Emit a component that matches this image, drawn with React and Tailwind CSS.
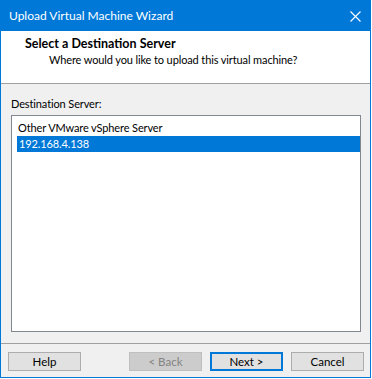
export default function App() {
  const font = { fontFamily: 'Lato, "Noto Sans", "Liberation Sans", sans-serif' };
  const t = "text-[11px] tracking-[-0.12px]";
  return (
    <div className="w-[372px] h-[379px] bg-white" style={font}>
      <div className="w-[371px] h-[378px] border border-[#0078d7] flex flex-col bg-[#f0f0f0]">
        <div className="h-[30px] shrink-0 bg-[#0078d7] flex items-center justify-between pl-[8px] pr-[9px]">
          <span className="text-white text-[12px] leading-none">Upload Virtual Machine Wizard</span>
          <svg width="11" height="11" viewBox="0 0 11 11" className="text-white">
            <path d="M0.5 0.5 L10.5 10.5 M10.5 0.5 L0.5 10.5" stroke="currentColor" strokeWidth="1.1" />
          </svg>
        </div>
        <div className="h-[53px] shrink-0 bg-white border-b border-[#a0a0a0] pt-[5px]">
          <div className="pl-[24px] text-[12.5px] font-bold leading-[16px] text-black">Select a Destination Server</div>
          <div className="pl-[48px] text-[11px] tracking-[-0.12px] leading-[15px] text-black">Where would you like to upload this virtual machine?</div>
        </div>
        <div className="flex-1 flex flex-col pt-[12px] pl-[10px] pr-[9px] pb-[11px] border-b border-[#a0a0a0]">
          <div className="text-[11px] tracking-[-0.12px] leading-[16px] text-black mb-[3px]">Destination Server:</div>
          <div className="flex-1 bg-white border border-[#828790] pt-[4px] pl-[5px]">
            <div className="h-[16px] text-[11px] tracking-[-0.12px] leading-[16px] pl-[1px] text-black">Other VMware vSphere Server</div>
            <div className="h-[16px] text-[11px] tracking-[-0.12px] leading-[16px] pl-[2px] bg-[#0078d7] text-white">192.168.4.138</div>
          </div>
        </div>
        <div className="h-[33px] shrink-0 flex items-start pt-[8px] pl-[7px]">
          <button className="w-[73px] h-[19px] bg-[#e1e1e1] border border-[#adadad] text-[11.5px] leading-none text-black">Help</button>
          <button className="ml-[48px] w-[73px] h-[19px] bg-[#cccccc] border border-[#bfbfbf] text-[11.5px] leading-none text-[#838383]">&lt; Back</button>
          <button className="ml-[8px] w-[73px] h-[19px] bg-[#e1e1e1] border-2 border-[#0078d7] text-[11.5px] leading-none text-black">Next &gt;</button>
          <button className="ml-[8px] w-[73px] h-[19px] bg-[#e1e1e1] border border-[#adadad] text-[11.5px] leading-none text-black">Cancel</button>
        </div>
      </div>
    </div>
  );
}
